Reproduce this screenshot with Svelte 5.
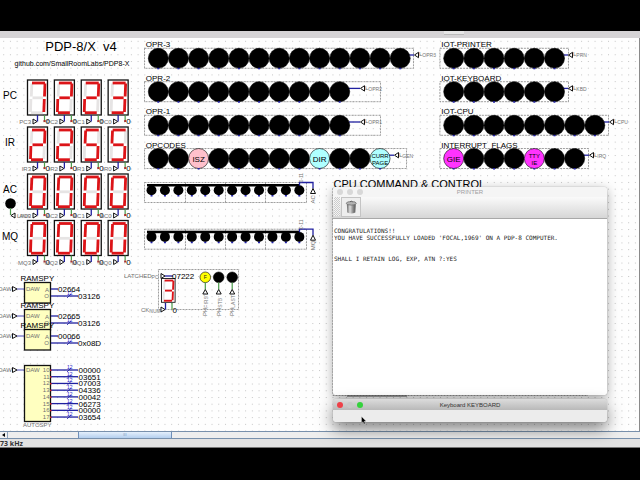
<script>
	// one grid step of the schematic
	const G = 6.72;

	// segment ends inside a 20 x 35 digit box
	const segs = {
		a: [4.5, 3, 17.5, 3],
		b: [17.5, 3.5, 17, 16.5],
		c: [16.8, 19, 16.3, 32],
		d: [3.5, 32.7, 15.5, 32.7],
		e: [3.4, 19, 3, 32],
		f: [4.4, 3.5, 3.8, 16.5],
		g: [5, 17.8, 15.5, 17.8],
	};
	const shapes = {
		0: "abcdef",
		2: "abdeg",
		3: "abcdg",
		5: "acdfg",
		7: "abc",
	};

	const registers = [
		{ name: "PC", x: 3, y: 80, digits: "7223" },
		{ name: "IR", x: 5, y: 127, digits: "2255" },
		{ name: "AC", x: 3, y: 174, digits: "0000" },
		{ name: "MQ", x: 2, y: 220.5, digits: "0000" },
	];

	const banks = [
		{ name: "OPR-3", x: 158.3, y: 58.3, count: 13, right: 413.5, tri: 414, sub: "OPR3" },
		{ name: "OPR-2", x: 158.3, y: 91.7, count: 10, right: 380.5, tri: 360, sub: "OPR2" },
		{ name: "OPR-1", x: 158.3, y: 125.3, count: 10, right: 380.5, tri: 360, sub: "OPR1" },
		{
			name: "OPCODES",
			x: 158.3,
			y: 158.5,
			count: 12,
			right: 406.5,
			tri: 394,
			sub: "GEN",
			lit: { 2: ["#ffc0cb", "ISZ"], 8: ["#afffff", "DIR"], 11: ["#afffff", "CURR", "PAGE"] },
		},
		{ name: "IOT-PRINTER", x: 453.7, y: 58.3, count: 6, right: 568.5, tri: 568, sub: "PRN" },
		{ name: "IOT-KEYBOARD", x: 453.7, y: 91.7, count: 6, right: 568.5, tri: 568, sub: "KBD" },
		{ name: "IOT-CPU", x: 453.7, y: 125.3, count: 8, right: 608.5, tri: 609, sub: "CPU" },
		{
			name: "INTERRUPT\u00a0 FLAGS",
			x: 453.7,
			y: 158.5,
			count: 7,
			right: 588.5,
			tri: 589,
			sub: "IRQ",
			lit: { 0: ["#ff33ff", "GIE"], 4: ["#ff33ff", "TTY", "IE"] },
		},
	];

	const bars = [
		{ name: "AC", y: 182.5 },
		{ name: "MQ", y: 229.2 },
	];

	const spies = [
		{ y: 282.5, a: "02664", o: "03126" },
		{ y: 309.5, a: "02665", o: "03126" },
		{ y: 329.5, a: "00066", o: "0x08D" },
	];
	const auto = ["00000", "03651", "07003", "04336", "00042", "06273", "00000", "03654"];

	const phases = [
		{ x: 205.3, sub: "FIRST", fill: "#ffff00" },
		{ x: 218.7, sub: "STB", fill: "#000" },
		{ x: 232.2, sub: "LAST", fill: "#000" },
	];

	const output = `
CONGRATULATIONS!!
YOU HAVE SUCCESSFULLY LOADED 'FOCAL,1969' ON A PDP-8 COMPUTER.


SHALL I RETAIN LOG, EXP, ATN ?:YES`;
</script>

{#snippet digit(value)}
	<rect width="20" height="35" class="case" />
	{#each Object.entries(segs) as [name, p]}
		{#if !shapes[value].includes(name)}
			<line x1={p[0]} y1={p[1]} x2={p[2]} y2={p[3]} class="seg" />
		{/if}
	{/each}
	{#each Object.entries(segs) as [name, p]}
		{#if shapes[value].includes(name)}
			<line x1={p[0]} y1={p[1]} x2={p[2]} y2={p[3]} class="seg on" />
		{/if}
	{/each}
{/snippet}

{#snippet bus(y)}
	<path d="M51 {y}H78" class="wire bold" />
	<path d="M67 {y + 2}l4 -4" class="wire" />
	<text x="67" y={y - 1} class="bits">12</text>
{/snippet}

{#snippet daw(y)}
	<text x="12" y={y + 2} class="pin" text-anchor="end">DAW</text>
	<path d="M12.5 {y - 2.5}l4.5 2.5l-4.5 2.5z" class="port" />
	<path d="M17 {y}H24" class="wire" />
	<text x="26" y={y + 2} class="pin">DAW</text>
{/snippet}

<main>
	<div class="desktop">
		<div class="toolstrip"><span></span></div>
		<svg class="schematic" role="img" aria-label="PDP-8/X schematic">
			<defs>
				<pattern id="dots" x="3.2" y="0.5" width={G} height={G} patternUnits="userSpaceOnUse">
					<rect width="1" height="1" fill="#c4c4c4" />
				</pattern>
			</defs>
			<g transform="translate(0 -38)">
				<rect y="38" width="100%" height="100%" fill="url(#dots)" />

				<text x="81" y="51" class="title" text-anchor="middle">PDP-8/X&nbsp; v4</text>
				<text x="72" y="66" class="link" text-anchor="middle">github.com/SmallRoomLabs/PDP8-X</text>

				{#each registers as reg}
					<text x={reg.x} y={reg.y + 19} class="reg">{reg.name}</text>
					{#each reg.digits as d, i}
						<g transform="translate({27.5 + i * 4 * G} {reg.y})">
							{@render digit(d)}
							<text x="3.5" y="44" class="pin" text-anchor="end">{reg.name}{3 - i}</text>
							<path d="M5.5 39l4 2.5l-4 2.5z" class="port" />
							<path d="M10 35v6.5" class="wire bold" />
							<path d="M17 35v5" class="wire green" />
							<rect x="16" y="40" width="2" height="2" fill="#a33" />
							<text x="18" y="44" class="value">0</text>
						</g>
					{/each}
				{/each}

				<circle cx="10.5" cy="203.5" r="5.3" />
				<path d="M10.5 208V215" class="wire green" />
				<path d="M15 213l-4 2.5l4 2.5z" class="port" />
				<text x="17" y="218" class="pin">LINK</text>

				{#each banks as b}
					<text x={b.x - 12.5} y={b.y - 11} class="value">{b.name}</text>
					<rect
						x={b.x - 13.8}
						y={b.y - 10}
						width={b.right - b.x + 13.8}
						height="20"
						class="dashed"
					/>
					<path d="M{b.x + (b.count - 1) * 3 * G + 9} {b.y - 3.3}H{b.tri}" class="wire bold" />
					<path d="M{b.tri + 4.5} {b.y - 6}l-4 2.7l4 2.7z" class="port" />
					<text x={b.tri + 5} y={b.y - 2} class="pin">L<tspan dy="1" class="sub">{b.sub}</tspan></text>
					{#each { length: b.count } as _, i}
						{@const lamp = b.lit?.[i]}
						{@const cx = b.x + i * 3 * G}
						<circle {cx} cy={b.y} r="10" fill={lamp ? lamp[0] : "#000"} stroke="#000" stroke-width="0.6" />
						<rect x={cx - 1} y={b.y + 9.5} width="2" height="1.5" fill="#22a" />
						{#if lamp?.length === 2}
							<text x={cx} y={b.y + 3} class="value" text-anchor="middle">{lamp[1]}</text>
						{:else if lamp}
							<text x={cx} y={b.y - 1} class="small" text-anchor="middle">{lamp[1]}</text>
							<text x={cx} y={b.y + 6} class="small" text-anchor="middle">{lamp[2]}</text>
						{/if}
					{/each}
				{/each}

				{#each bars as bar}
					<rect x="144.5" y={bar.y} width="162" height="20" class="dashed" />
					{#each [185.5, 225.5, 265.5] as x}
						<path d="M{x} {bar.y}v20" class="dashed" />
					{/each}
					<rect x="147" y={bar.y + 1.5} width="153" height="2.5" />
					{#each { length: 12 } as _, i}
						{@const cx = 151.5 + i * 2 * G}
						<circle {cx} cy={bar.y + 7.7} r="5" />
						<rect x={cx - 1} y={bar.y + 12.5} width="2" height="1.5" fill="#22a" />
					{/each}
					<path d="M299.5 {bar.y + 3}v-3h13.5v6" class="wire bold" />
					<path d="M310.5 {bar.y + 11}l2.5 -5l2.5 5z" class="port" />
					<text transform="translate(315 {bar.y + 21}) rotate(-90)" class="pin">{bar.name}</text>
					<text transform="translate(303 {bar.y}) rotate(-90)" class="sub">0-11</text>
				{/each}

				<rect x="158.5" y="269.5" width="80" height="40" class="dashed" />
				<g transform="translate(161.5 278.5) scale(0.68)">
					{@render digit("3")}
				</g>
				<text x="124" y="278" class="pin">LATCHED<tspan dy="1" class="sub">PC</tspan></text>
				<path d="M161 273.5l4 2.5l-4 2.5z" class="port" />
				<path d="M165 276H173" class="wire bold" />
				<text x="172" y="279" class="value">07222</text>
				<text x="141" y="312" class="pin">CK<tspan dy="1" class="sub">NUM</tspan></text>
				<path d="M161 307l4 2.5l-4 2.5z" class="port" />
				<path d="M165.5 303v6.5" class="wire bold" />
				<path d="M172 303v6.5" class="wire green" />
				<text x="172.5" y="312.5" class="value">0</text>

				{#each phases as p}
					<circle cx={p.x} cy="277.3" r="5.3" fill={p.fill} stroke="#000" stroke-width="0.6" />
					<path d="M{p.x} 282.6v7" class="wire green" />
					<path d="M{p.x - 2.5} 294l2.5 -4.5l2.5 4.5z" class="port" />
					<text transform="translate({p.x + 2} 316) rotate(-90)" class="pin"
						>PH<tspan dy="1" class="sub">{p.sub}</tspan></text
					>
				{/each}
				<text x="205.3" y="279" class="sub dark" text-anchor="middle">F</text>

				{#each spies as s}
					<rect x="24.5" y={s.y} width="26" height="20.5" class="chip" />
					{@render daw(s.y + 6.5)}
					<text x="49" y={s.y + 9} class="pin" text-anchor="end">A</text>
					<text x="49" y={s.y + 15.5} class="pin" text-anchor="end">O</text>
					<path d="M51 {s.y + 6.5}H58" class="wire bold" />
					<text x="58" y={s.y + 9.5} class="value">{s.a}</text>
					{@render bus(s.y + 13.5)}
					<text x="78" y={s.y + 16.5} class="value">{s.o}</text>
				{/each}
				{#each spies as s}
					<text x="20.5" y={s.y - 1.5} class="value">RAMSPY</text>
				{/each}

				<rect x="24.5" y="365.5" width="26" height="56" class="chip" />
				{@render daw(370)}
				{#each auto as value, i}
					{@const y = 370 + i * G}
					<text x="49.5" y={y + 2} class="pin" text-anchor="end">{10 + i}</text>
					{@render bus(y)}
					<rect x="50" y={y - 0.5} width="1.5" height="1.5" fill="#c22" />
					<text x="78.5" y={y + 3} class="value">{value}</text>
				{/each}
				<text x="23" y="427" class="pin">AUTOSPY</text>

				<text x="333.5" y="188" class="heading">CPU COMMAND &amp; CONTROL</text>
				<path d="M333 188V395.5H588" class="dashed" />
				<path d="M347 396H407" stroke="#555" />
			</g>
		</svg>
		<div class="scrollbar">
			<button aria-label="Scroll left"><svg viewBox="0 0 7 6"><path d="M5 1v4l-3 -2z" /></svg></button>
			<div class="track"><div class="thumb">III</div></div>
		</div>
		<footer>73 kHz</footer>

		<section class="window printer">
			<header>
				<div class="lights"><i></i><i></i><i></i></div>
				<h2>PRINTER</h2>
			</header>
			<div class="tools">
				<div class="grip"></div>
				<button aria-label="Clear">
					<svg viewBox="0 0 18 18">
						<defs>
							<linearGradient id="metal">
								<stop offset="0" stop-color="#666" />
								<stop offset="0.35" stop-color="#ddd" />
								<stop offset="0.7" stop-color="#888" />
								<stop offset="1" stop-color="#555" />
							</linearGradient>
						</defs>
						<path d="M4.8 5.5h9l-0.5 9q-4 2 -8 0z" fill="url(#metal)" />
						<ellipse cx="9.3" cy="5.3" rx="5" ry="1.8" fill="#b4b4b4" stroke="#666" stroke-width="0.7" />
						<path d="M8 3.8q1.3 -1.3 2.6 0" fill="none" stroke="#555" stroke-width="0.8" />
					</svg>
				</button>
			</div>
			<pre>{output}</pre>
		</section>

		<section class="window keyboard">
			<header>
				<div class="lights"><i class="red"></i><i></i><i class="green"></i></div>
				<h2>Keyboard KEYBOARD</h2>
			</header>
		</section>

		<svg class="cursor" viewBox="0 0 6 9">
			<path d="M0.5 0.5v6.5l1.5 -1.3l1 2.3l1.2 -0.5l-1 -2.2h2z" stroke="#fff" stroke-width="0.3" />
		</svg>
	</div>
</main>

<style>
	:global(body) {
		margin: 0;
		background: #000;
	}

	main {
		box-sizing: border-box;
		height: 100vh;
		padding: 31px 0 32px;
		background: #000;
		font-family: "Liberation Sans", Arial, sans-serif;
		overflow: hidden;
	}

	.desktop {
		position: relative;
		display: flex;
		flex-direction: column;
		height: 100%;
		overflow: hidden;
	}

	.toolstrip {
		flex: none;
		height: 7px;
		background: #d5d3d5;
	}

	.toolstrip span {
		display: block;
		width: 20px;
		height: 3px;
		margin-left: 444px;
		background: #e6e6e6;
		border-bottom: 1px solid #bbb;
	}

	.schematic {
		display: block;
		box-sizing: border-box;
		flex: 1;
		width: 100%;
		min-height: 0;
		background: #fefefe;
		border-right: 1px solid #8a8a8a;
	}

	.title {
		font-size: 13px;
	}

	.link {
		font-size: 7px;
	}

	.reg {
		font-size: 10px;
	}

	.heading {
		font-size: 11px;
	}

	.value {
		font-size: 8px;
	}

	.small {
		font-size: 6px;
	}

	.pin {
		font-size: 6px;
		fill: #707070;
	}

	.sub {
		font-size: 5px;
		fill: #777;
	}

	.dark {
		fill: #222;
	}

	.bits {
		font-size: 5px;
		fill: #22c;
	}

	.case {
		fill: #fff;
		stroke: #111;
		stroke-width: 1.3;
	}

	.seg {
		stroke: #e6e4e4;
		stroke-width: 2.8;
	}

	.seg.on {
		stroke: #dc1418;
	}

	.wire {
		fill: none;
		stroke: #2020a0;
		stroke-width: 0.8;
	}

	.bold {
		stroke-width: 1.3;
	}

	.wire.green {
		stroke: #4a9a4a;
		stroke-width: 1.2;
	}

	.port {
		fill: #fff;
		stroke: #111;
	}

	.dashed {
		fill: none;
		stroke: #888;
		stroke-width: 0.8;
		stroke-dasharray: 2 1;
	}

	.chip {
		fill: #ffffc0;
		stroke: #111;
		stroke-width: 1.3;
	}

	.scrollbar {
		display: flex;
		flex: none;
		box-sizing: border-box;
		height: 8px;
		background: #eee;
		border-top: 1px solid #7890ac;
		border-bottom: 1px solid #7890ac;
	}

	.scrollbar button {
		width: 8px;
		padding: 0;
		border: 0;
		border-right: 1px solid #8fa3bb;
		background: #f2f2f2;
	}

	.scrollbar svg {
		display: block;
		width: 7px;
		height: 6px;
	}

	.track {
		flex: 1;
	}

	.thumb {
		box-sizing: border-box;
		width: 15%;
		height: 6px;
		margin-left: 11%;
		border: solid #6f8fb8;
		border-width: 0 1px;
		background: linear-gradient(#e4effb, #b4cfee);
		color: #7898c0;
		font-size: 4px;
		line-height: 6px;
		text-align: center;
	}

	footer {
		flex: none;
		height: 9px;
		background: #e2e2e2;
		border-bottom: 1px solid #777;
		box-sizing: border-box;
		font: bold 7px/9px "Open Sans", sans-serif;
		color: #333;
	}

	.window {
		position: absolute;
		left: 333px;
		width: 274px;
		border-radius: 3px 3px 2px 2px;
		background: #fff;
		overflow: hidden;
	}

	.printer {
		top: 156px;
		height: 208px;
		box-shadow: 0 3px 12px rgba(0, 0, 0, 0.35), 0 0 1px #888;
	}

	.keyboard {
		top: 368px;
		height: 23px;
		background: #ececec;
		box-shadow: 0 7px 16px rgba(0, 0, 0, 0.5), 0 0 1px #888;
	}

	.window header {
		display: grid;
		grid-template-columns: 40px 1fr 40px;
		align-items: center;
		height: 10px;
		background: #f5f5f5;
	}

	.keyboard header {
		height: 11px;
		background: linear-gradient(#dcdcdc, #b9b9b9);
	}

	.lights {
		display: flex;
		gap: 4px;
		padding-left: 4px;
	}

	.lights i {
		width: 6px;
		height: 6px;
		border-radius: 50%;
		background: #d8d8d8;
	}

	.keyboard .lights i {
		background: #c8c8c8;
	}

	.keyboard .lights .red {
		background: #ee4048;
	}

	.keyboard .lights .green {
		background: #34d23c;
	}

	h2 {
		margin: 0;
		color: #a0a0a0;
		font-size: 6px;
		font-weight: normal;
		line-height: 10px;
		text-align: center;
	}

	.keyboard h2 {
		color: #333;
	}

	.tools {
		display: flex;
		height: 21px;
		background: linear-gradient(#fafafa, #d6d6d6);
		border-bottom: 1px solid #a8a8a8;
	}

	.grip {
		width: 6px;
		height: 19px;
		margin-left: 1px;
		background: repeating-conic-gradient(#ccc 0 25%, #f4f4f4 0 50%) 0 0 / 2px 2px;
	}

	.tools button {
		width: 20px;
		height: 20px;
		margin-left: 1px;
		padding: 0;
		border: 1px solid #c4c4c4;
		background: #eee;
	}

	.tools svg {
		display: block;
		width: 18px;
		height: 18px;
	}

	pre {
		margin: 0;
		padding: 1px;
		color: #222;
		font: 6px/7px "DejaVu Sans Mono", monospace;
	}

	.cursor {
		position: absolute;
		top: 385px;
		left: 361px;
		width: 6px;
		height: 9px;
	}
</style>
